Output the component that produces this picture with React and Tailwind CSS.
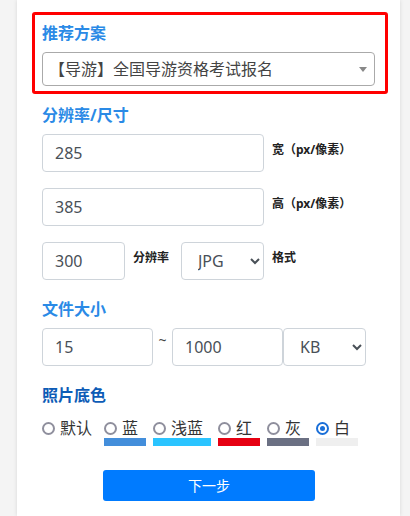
import React from 'react';

const font = { fontFamily: '"Noto Sans", "Noto Sans CJK SC", sans-serif' };

const inputCls =
  'h-[38px] border border-[#ced4da] rounded-[4px] bg-white px-3 text-[16px] text-[#495057] outline-none';
const selectCls =
  'h-[38px] w-[83px] border border-[#ced4da] rounded-[4px] bg-white pl-[12px] pr-[4px] text-[16px] text-[#495057] outline-none';
const labelCls = 'text-[12px] font-bold text-[#222] leading-4 pt-[8px]';
const headingCls = 'text-[16px] font-bold leading-6 text-[#2a8ae6]';

const colors = [
  { id: 'default', label: '默认', bar: null, pr: 'pr-[5px]' },
  { id: 'blue', label: '蓝', bar: 'bg-[#438edb]', pr: 'pr-[8px]' },
  { id: 'lightblue', label: '浅蓝', bar: 'bg-[#2ac4ff]', pr: 'pr-[8px]' },
  { id: 'red', label: '红', bar: 'bg-[#e60012]', pr: 'pr-[8px]' },
  { id: 'gray', label: '灰', bar: 'bg-[#6b7083]', pr: 'pr-[8px]' },
  { id: 'white', label: '白', bar: 'bg-[#efefef]', pr: 'pr-[8px]' },
];

export default function App() {
  const [bg, setBg] = React.useState('white');

  return (
    <div className="min-h-[516px] h-[516px] overflow-hidden bg-[#f4f4f4]" style={font}>
      <div className="ml-[17px] w-[383px] h-[516px] bg-white shadow-[0_0_4px_rgba(0,0,0,0.12)] pt-[12px]">
        {/* Recommended plan */}
        <div className="ml-[15px] w-[356px] border-[3px] border-[#ff0000] rounded-[3px] px-[7px] pt-[6px] pb-[5px]">
          <div className={headingCls}>推荐方案</div>
          <div className="relative mt-[7px] w-[333px]">
            <select className="appearance-none w-full h-[34px] border border-[#aaa] rounded-[4px] bg-white pl-[6px] text-[16px] text-[#444] outline-none">
              <option>【导游】全国导游资格考试报名</option>
            </select>
            <svg className="absolute right-[8px] top-[15px]" width="8" height="5" viewBox="0 0 8 5">
              <path d="M0 0 L8 0 L4 5 Z" fill="#888" />
            </svg>
          </div>
        </div>

        <div className="pl-[25px]">
          {/* Size */}
          <div className={`${headingCls} mt-[9px]`}>分辨率/尺寸</div>
          <div className="mt-[7px] flex items-start gap-[8px]">
            <input className={`${inputCls} w-[222px]`} defaultValue="285" />
            <span className={labelCls}>宽（px/像素）</span>
          </div>
          <div className="mt-[16px] flex items-start gap-[8px]">
            <input className={`${inputCls} w-[222px]`} defaultValue="385" />
            <span className={labelCls}>高（px/像素）</span>
          </div>
          <div className="mt-[16px] flex items-start">
            <input className={`${inputCls} w-[83px]`} defaultValue="300" />
            <span className={`${labelCls} ml-[8px] w-[48px]`}>分辨率</span>
            <select className={selectCls} defaultValue="JPG">
              <option>JPG</option>
              <option>PNG</option>
            </select>
            <span className={`${labelCls} ml-[8px]`}>格式</span>
          </div>

          {/* File size */}
          <div className={`${headingCls} mt-[17px]`}>文件大小</div>
          <div className="mt-[7px] flex items-start">
            <input className={`${inputCls} w-[111px]`} defaultValue="15" />
            <span className="w-[19px] text-center text-[14px] leading-4 text-[#444] pt-[4px]">~</span>
            <input className={`${inputCls} w-[111px]`} defaultValue="1000" />
            <select className={selectCls} defaultValue="KB">
              <option>KB</option>
              <option>MB</option>
            </select>
          </div>

          {/* Background colour */}
          <div className="mt-[17px] text-[16px] font-bold leading-6 text-[#0d5cb6]">照片底色</div>
          <div className="mt-[11px] flex items-start gap-[7px]">
            {colors.map((c) => {
              const checked = bg === c.id;
              return (
                <label key={c.id} className="flex flex-col cursor-pointer">
                  <span className={`flex items-center h-[20px] ${c.pr}`}>
                    <input
                      type="radio"
                      name="bg"
                      checked={checked}
                      onChange={() => setBg(c.id)}
                      className="sr-only"
                    />
                    <span
                      className={`w-[13px] h-[13px] rounded-full border-[2px] bg-white flex items-center justify-center mt-[1px] ${
                        checked ? 'border-[#1a6fd8]' : 'border-[#8f8f9d]'
                      }`}
                    >
                      {checked && <span className="w-[5px] h-[5px] rounded-full bg-[#1a6fd8]" />}
                    </span>
                    <span className="ml-[5px] text-[16px] leading-5 text-[#333]">{c.label}</span>
                  </span>
                  {c.bar ? <span className={`h-[8px] w-full ${c.bar}`} /> : <span className="h-[8px]" />}
                </label>
              );
            })}
          </div>

          {/* Next */}
          <button className="mt-[24px] ml-[61px] w-[212px] h-[31px] rounded-[3px] bg-[#007bff] text-white text-[14px]">
            下一步
          </button>
        </div>
      </div>
    </div>
  );
}
